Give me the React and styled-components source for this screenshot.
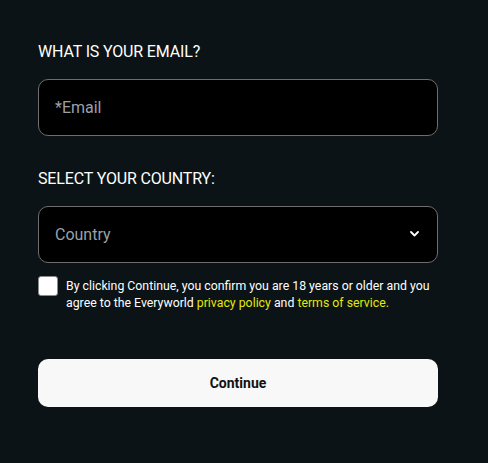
import React, { useState } from "react";
import styled, { createGlobalStyle } from "styled-components";

const GlobalStyle = createGlobalStyle`
  html, body {
    margin: 0;
    background: #0b1316;
    font-family: Roboto, "Liberation Sans", Arial, sans-serif;
  }
`;

const Wrapper = styled.div`
  min-height: 463px;
  background: #0b1316;
  padding: 42px 50px 0 38px;
  box-sizing: border-box;
`;

const Form = styled.form`
  width: 400px;
  display: flex;
  flex-direction: column;
`;

const Label = styled.label`
  color: #fff;
  font-size: 16px;
  font-weight: 400;
  line-height: 19px;
  letter-spacing: -0.15px;
  margin-bottom: ${(p) => p.$gap || 18}px;
`;

const Field = styled.div`
  position: relative;
  height: 57px;
  margin-bottom: ${(p) => p.$after || 0}px;
`;

const TextInput = styled.input`
  width: 100%;
  height: 100%;
  box-sizing: border-box;
  background: #000;
  border: 1px solid #6e6e6e;
  border-radius: 10px;
  padding: 0 16px;
  color: #fff;
  font-family: inherit;
  font-size: 16px;
  outline: none;
  &::placeholder {
    color: #9aa1a8;
  }
`;

const SelectBox = styled.select`
  width: 100%;
  height: 100%;
  box-sizing: border-box;
  background: #000;
  border: 1px solid #6e6e6e;
  border-radius: 10px;
  padding: 0 16px;
  color: #9aa1a8;
  font-family: inherit;
  font-size: 16px;
  appearance: none;
  outline: none;
`;

const Chevron = styled.svg`
  position: absolute;
  right: 19px;
  top: 25px;
  pointer-events: none;
`;

const Agree = styled.div`
  display: flex;
  align-items: flex-start;
  gap: 8px;
  margin-top: 13px;
`;

const Box = styled.span`
  flex: none;
  width: 18px;
  height: 18px;
  background: #fff;
  border: 1px solid #8a8a8a;
  border-radius: 3px;
  cursor: pointer;
`;

const AgreeText = styled.p`
  margin: 2px 0 0;
  color: #fff;
  font-size: 12.3px;
  font-weight: 400;
  line-height: 17px;
`;

const Link = styled.a`
  color: #e4e80a;
  text-decoration: none;
`;

const Button = styled.button`
  margin-top: 47px;
  height: 48px;
  border: none;
  border-radius: 10px;
  background: #f8f8f8;
  color: #111;
  font-family: inherit;
  font-size: 14px;
  font-weight: 700;
  cursor: pointer;
`;

const App = () => {
  const [checked, setChecked] = useState(false);
  return (
    <Wrapper>
      <GlobalStyle />
      <Form onSubmit={(e) => e.preventDefault()}>
        <Label>WHAT IS YOUR EMAIL?</Label>
        <Field $after={33}>
          <TextInput type="email" placeholder="*Email" />
        </Field>
        <Label>SELECT YOUR COUNTRY:</Label>
        <Field>
          <SelectBox defaultValue="">
            <option value="" disabled>
              Country
            </option>
          </SelectBox>
          <Chevron width="9" height="6" viewBox="0 0 9 6">
            <path
              d="M1 1l3.5 3.5L8 1"
              fill="none"
              stroke="#fff"
              strokeWidth="1.8"
              strokeLinecap="round"
              strokeLinejoin="round"
            />
          </Chevron>
        </Field>
        <Agree>
          <Box onClick={() => setChecked(!checked)} />
          <AgreeText>
            By clicking Continue, you confirm you are 18 years or older and you
            agree to the Everyworld <Link href="#">privacy policy</Link> and{" "}
            <Link href="#">terms of service.</Link>
          </AgreeText>
        </Agree>
        <Button type="submit">Continue</Button>
      </Form>
    </Wrapper>
  );
};

export default App;
